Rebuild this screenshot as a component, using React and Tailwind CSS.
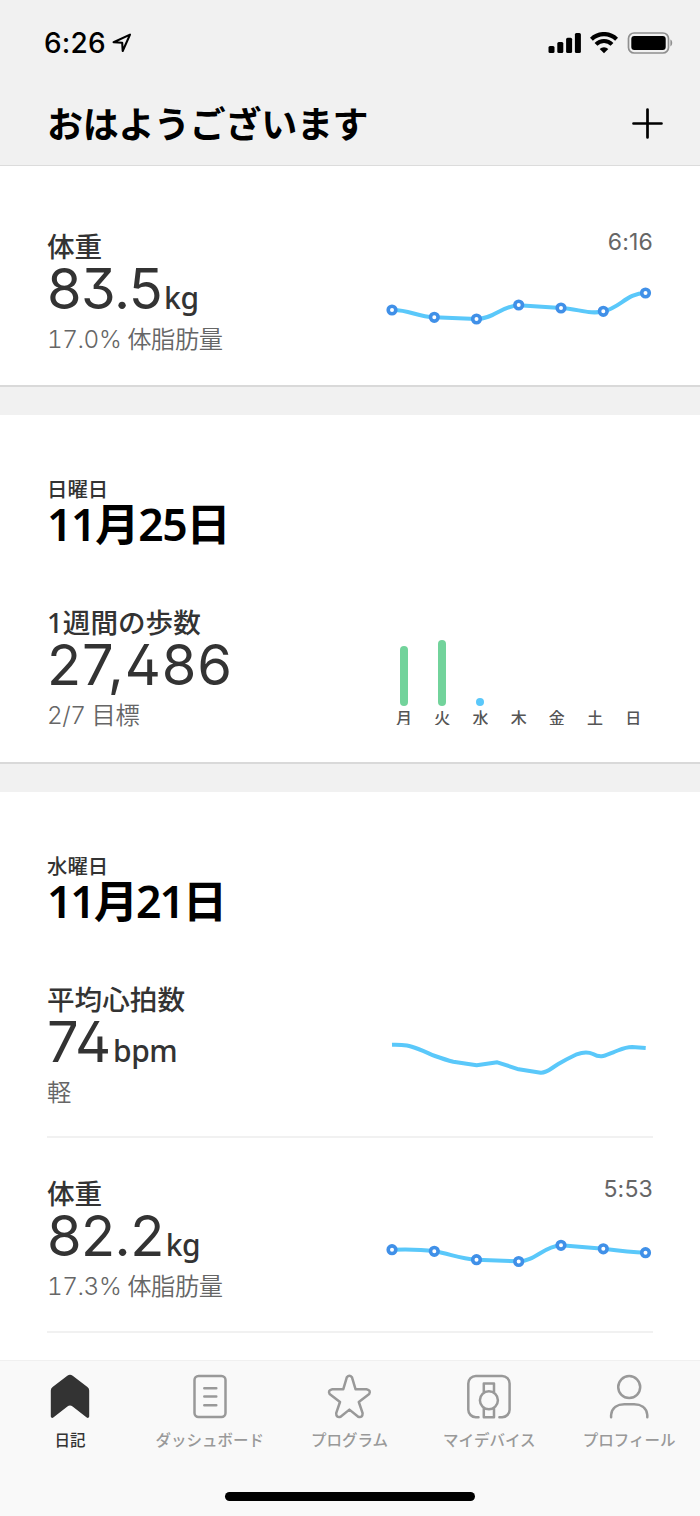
import React from 'react';
import clsx from 'clsx';

const jp = "font-['Noto_Sans_CJK_JP',sans-serif]";
const mixed = "font-['Inter','Noto_Sans_CJK_JP',sans-serif]";

const StatusBar = () => (
  <div className="flex h-[82px] items-center justify-between pl-[44px] pr-[27px] pt-1">
    <div className="flex items-center">
      <span className="w-[62px] font-['Inter',sans-serif] text-[28px] font-medium leading-8 tracking-[0.2px]">6:26</span>
      <svg className="ml-[6px] h-5 w-5" viewBox="0 0 20 20" fill="none" stroke="#000" strokeWidth="2.1" strokeLinejoin="round">
        <path d="M1.6 9.2 18 1.6 10.7 18 10.2 9.8Z" />
      </svg>
    </div>
    <div className="flex items-center">
      <svg width="34" height="22" viewBox="0 0 34 22">
        <rect x="0.5" y="14" width="6" height="7" rx="1.5" />
        <rect x="9.3" y="10" width="6" height="11" rx="1.5" />
        <rect x="18.1" y="5.7" width="6" height="15.3" rx="1.5" />
        <rect x="26.9" y="1" width="6" height="20" rx="1.5" />
      </svg>
      <svg className="ml-[8px]" width="28" height="22" viewBox="0 0 28 22">
        <path d="M1.4 7.2a18 18 0 0 1 25.2 0" fill="none" stroke="#000" strokeWidth="4.2" />
        <path d="M6 12.4a11.3 11.3 0 0 1 16 0" fill="none" stroke="#000" strokeWidth="4" />
        <path d="M9.7 16.9a6.2 6.2 0 0 1 8.6 0L14 21.2Z" />
      </svg>
      <svg className="ml-[9px]" width="46" height="22" viewBox="0 0 46 22">
        <rect x="1.5" y="1" width="40" height="20" rx="5.6" fill="none" stroke="#8f8f8f" strokeWidth="1.7" />
        <rect x="4.3" y="4" width="34.4" height="14" rx="3" />
        <path d="M43.4 7.6c2.4 1 2.4 5.8 0 6.8Z" fill="#8f8f8f" />
      </svg>
    </div>
  </div>
);

const Header = () => (
  <header className="h-[166px] shrink-0 border-b border-[#dcdcdc] bg-[#f1f1f1] text-black">
    <StatusBar />
    <div className="flex h-[82px] items-center justify-between pl-[47px] pr-[37px]">
      <h1 className={clsx(jp, 'text-[36px] font-bold leading-[48px] tracking-[-0.3px] pb-[3px]')}>おはようございます</h1>
      <svg width="31" height="31" viewBox="0 0 31 31" stroke="#000" strokeWidth="2.7" strokeLinecap="round">
        <path d="M15.5 1.5v28M1.5 15.5h28" />
      </svg>
    </div>
  </header>
);

const LineChart = ({ path, points = [] }) => (
  <svg width="268" height="110" viewBox="0 0 268 110" fill="none">
    <path d={path} stroke="#5ac8fa" strokeWidth="4" strokeLinejoin="round" />
    {points.map(([x, y]) => (
      <circle key={x} cx={x} cy={y} r="3.8" fill="#fff" stroke="#4090e8" strokeWidth="3.6" />
    ))}
  </svg>
);

const days = [
  { name: '月', height: 60, color: 'bg-[#72d39b]' },
  { name: '火', height: 66, color: 'bg-[#72d39b]' },
  { name: '水', height: 8, color: 'bg-[#5ac8fa]' },
  { name: '木', height: 0 },
  { name: '金', height: 0 },
  { name: '土', height: 0 },
  { name: '日', height: 0 },
];

const StepsChart = () => (
  <div className="flex h-[98px]">
    {days.map((day) => (
      <div key={day.name} className="flex w-[38.2px] flex-col items-center">
        <div className="flex h-[79px] items-end">
          <div className={clsx('w-2 rounded-full', day.color)} style={{ height: day.height }} />
        </div>
        <div className="h-[19px] overflow-hidden">
          <span className={clsx(jp, 'block text-[16px] font-medium leading-[22px] text-[#555]')}>{day.name}</span>
        </div>
      </div>
    ))}
  </div>
);

const Metric = ({ label, value, unit, detail, time, spacing = 'tracking-[-0.6px]', children }) => (
  <div className="flex h-[130px] justify-between pl-[47px] pr-[47px]">
    <div>
      <h3 className="h-[30px] font-['Noto_Sans','Noto_Sans_CJK_JP',sans-serif] text-[27.6px] font-medium leading-[30px] text-[#333]">{label}</h3>
      <div className="flex h-[56px] items-baseline font-['Inter',sans-serif] leading-[56px] text-[#333]">
        <span className={clsx("text-[56px] [font-feature-settings:'cv02','cv09']", spacing)}>{value}</span>
        {unit && <span className="ml-[2px] font-['Noto_Sans',sans-serif] text-[30px] font-medium tracking-[-0.4px]">{unit}</span>}
      </div>
      <p className={clsx(mixed, 'h-11 text-[24.3px] font-[350] leading-[44px] tracking-[-0.45px] text-[#666] tabular-nums')}>{detail}</p>
    </div>
    <div className="w-[268px]">
      <div className="h-5 pt-px text-right font-['Inter',sans-serif] text-[23px] leading-5 tracking-[0.2px] text-[#666]">{time}</div>
      {children}
    </div>
  </div>
);

const DateHeading = ({ weekday, date, spacing }) => (
  <div className="mb-[58px] pl-[47px]">
    <p className={clsx(jp, 'h-6 text-[20.4px] font-medium leading-[22px] text-[#333]')}>{weekday}</p>
    <h2 className={clsx("h-12 font-['Noto_Sans','Noto_Sans_CJK_JP',sans-serif] text-[44.5px] font-semibold leading-[46px] text-black", spacing)}>{date}</h2>
  </div>
);

const Divider = () => <div className="mx-[47px] h-[2px] bg-[#f1f1f1]" />;

const tabs = [
  {
    name: '日記',
    active: true,
    icon: (
      <path
        d="M19.3 1.8a4.6 4.6 0 0 1 5.4 0L39.4 13a4.5 4.5 0 0 1 1.8 3.600V42.500a1.500 1.500 0 0 1-2.500 1L24.600 32.400a4.200 4.200 0 0 0-5.200 0L5.300 43.500a1.500 1.500 0 0 1-2.500-1V16.600a4.500 4.500 0 0 1 1.800-3.600Z"
        fill="#333"
        stroke="none"
      />
    ),
  },
  {
    name: 'ダッシュボード',
    icon: (
      <>
        <rect x="6.5" y="2" width="31" height="41" rx="4" />
        <path d="M16.3 14.2h12M16.3 22.6h12M16.3 31.2h12" />
      </>
    ),
  },
  {
    name: 'プログラム',
    icon: (
      <path d="M19.8 3.4q2.6-3.2 5.2 0L28.5 15.2H39.5Q44.2 16.2 42.2 20L31.8 28 35.600 39.200Q35.700 44 31.200 42.700L22.400 35.600 13.600 42.700Q9.100 44 9.200 39.200L13 28 2.600 20Q.6 16.200 5.300 15.200H16.300Z" />
    ),
  },
  {
    name: 'マイデバイス',
    icon: (
      <>
        <path d="M11.5 43.2H8.8a7.5 7.5 0 0 1-7.5-7.5V9.5A7.5 7.5 0 0 1 8.8 2h26.3a7.5 7.5 0 0 1 7.5 7.5v26.2a7.5 7.5 0 0 1-7.5 7.5H32.400" />
        <circle cx="21.9" cy="26.3" r="9" />
        <path d="M16.8 18V9.5h10.2V18M16.8 34.6V43.2h10.2V34.6" />
      </>
    ),
  },
  {
    name: 'プロフィール',
    icon: (
      <>
        <circle cx="22.200" cy="13.100" r="11" />
        <path d="M4.100 43.300V41C4.800 33.500 10.800 30.200 17.300 30.200h9.800c6.500 0 12.500 3.300 13.200 10.800v2.300" />
      </>
    ),
  },
];

const TabBar = () => (
  <nav className="flex h-[156px] shrink-0 flex-col border-t border-[#f0f0f0] bg-[#f9f9f9]">
    <div className="flex h-[131px] pt-[13px]">
      {tabs.map((tab) => (
        <div key={tab.name} className="flex w-[139.8px] flex-col items-center">
          <svg width="44" height="45" viewBox="0 0 44 45" fill="none" stroke="#999" strokeWidth="2.5" strokeLinejoin="round" strokeLinecap="round" className="overflow-visible">
            {tab.icon}
          </svg>
          <span className={clsx(jp, 'mt-[8px] whitespace-nowrap text-[15.5px] font-medium leading-6', tab.active ? 'text-[#333]' : 'text-[#999]')}>
            {tab.name}
          </span>
        </div>
      ))}
    </div>
    <div className="mx-auto h-[9px] w-[250px] rounded-full bg-black" />
  </nav>
);

const App = () => (
  <div lang="ja" className="flex h-[1516px] w-[700px] flex-col overflow-hidden bg-white">
    <Header />
    <main className="min-h-0 flex-1 overflow-hidden bg-[#f1f1f1]">
      <section className="mb-7 border-b-2 border-[#d9d9d9] bg-white pb-6 pt-[65px]">
        <Metric label="体重" value="83.5" unit="kg" detail="17.0% 体脂肪量" time="6:16">
          <LineChart
            path="M7 59C24 58.5 32 66 49.3 66.3L91.5 68C109 68 116 55 133.7 54.3L176 57C192 57.5 205 64 218.3 60.3C235 57 242 42 260.5 42"
            points={[[7, 59], [49.3, 66.3], [91.5, 68], [133.7, 54], [176, 57], [218.3, 60.3], [260.5, 42]]}
          />
        </Metric>
      </section>

      <section className="mb-7 border-b-2 border-[#d9d9d9] bg-white pb-[25px] pt-[62px]">
        <DateHeading weekday="日曜日" date="11月25日" spacing="tracking-[-1.4px]" />
        <Metric label="1週間の歩数" value="27,486" detail="2/7 目標" spacing="tracking-[0.9px]">
          <StepsChart />
        </Metric>
      </section>

      <section className="bg-white pb-10 pt-[62px]">
        <DateHeading weekday="水曜日" date="11月21日" spacing="tracking-[-2.1px]" />
        <Metric label="平均心拍数" value="74" unit="bpm" detail="軽" spacing="tracking-[-0.2px]">
          <LineChart path="M7 40.7C20 40.3 25 42 33.3 45S44 49.8 50 52 61 56 68.3 57.7L91.7 61.3 112.3 58.3 133.7 65.3 155.7 68.7C162 69 165 65 173.3 60S185 53.5 191.7 50.3C201 46.8 206 49 208 50C216 54.5 220 51.5 228.3 48.3S240 43 247 43L260.7 44" />
        </Metric>
        <div className="mt-[22px]">
          <Divider />
        </div>
        <div className="pb-[23px] pt-10">
          <Metric label="体重" value="82.2" unit="kg" detail="17.3% 体脂肪量" time="5:53">
            <LineChart
              path="M7 51.7C24 51 34 51 49.3 53.3S74 60.5 91.5 61.7L133.7 63.3C150 63.3 158 48.5 176 47.3L218.3 50.8C235 53 245 54.3 260.5 54.7"
              points={[[7, 51.7], [49.3, 53.3], [91.5, 61.7], [133.7, 63.5], [176, 47.3], [218.3, 50.8], [260.5, 54.7]]}
            />
          </Metric>
        </div>
        <Divider />
      </section>
    </main>
    <TabBar />
  </div>
);

export default App;
